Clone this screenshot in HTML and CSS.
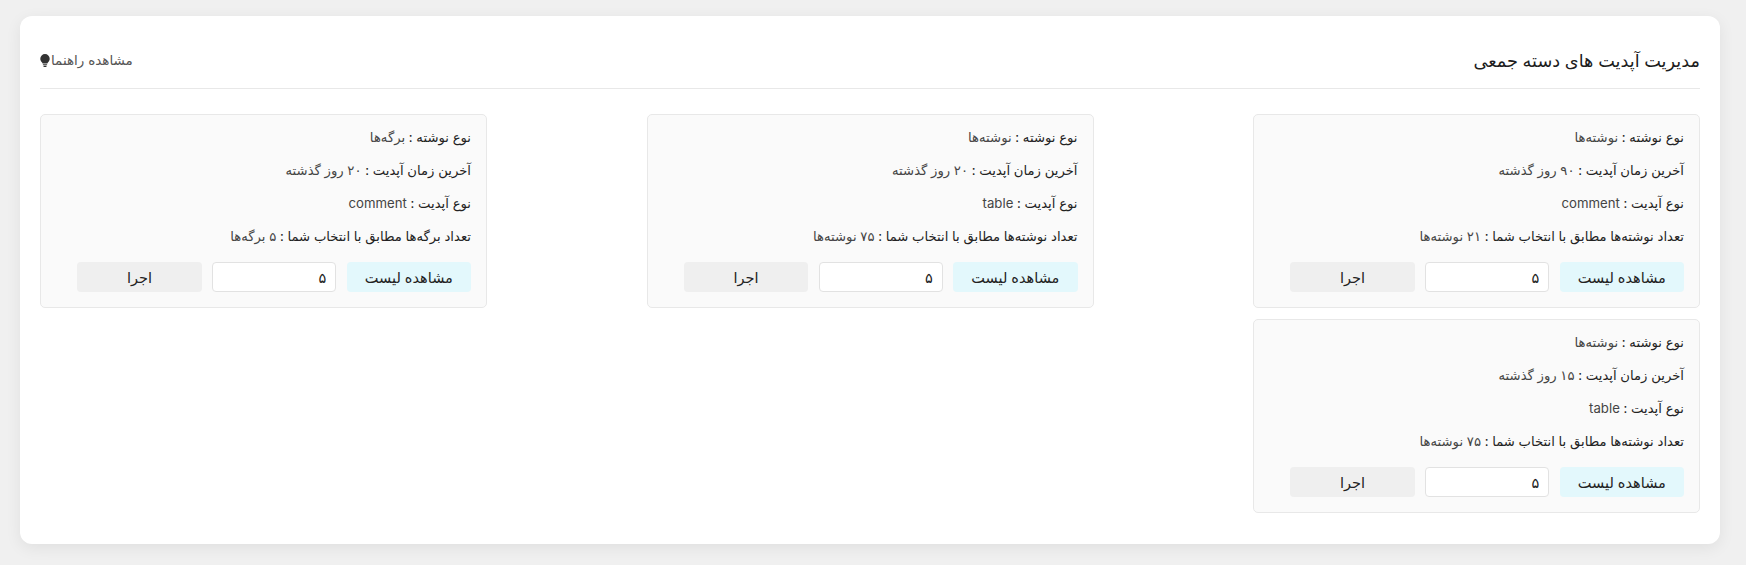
FILE: index.html
```html
<!DOCTYPE html>
<html lang="fa" dir="rtl">
<head>
  <meta charset="UTF-8" />
  <meta name="viewport" content="width=device-width, initial-scale=1.0"/>
  <title>مدیریت آپدیت های دسته جمعی</title>
  <link rel="stylesheet" href="styles.css">
</head>
<body>

<div class="panel">
  <div class="panel-head">
    <h2>مدیریت آپدیت های دسته جمعی</h2>
    <a class="guide" href="#">
      مشاهده راهنما
      <svg class="bulb" viewBox="0 0 10 13" width="10" height="13"><path fill="#333" d="M5 0a4.7 4.7 0 0 0-4.7 4.7c0 1.7.9 2.7 1.6 3.6.4.5.6.9.7 1.2h4.800c.1-.3.3-.7.7-1.200.7-.9 1.600-1.900 1.600-3.600A4.700 4.700 0 0 0 5 0z"/><rect fill="#333" x="2.800" y="10.200" width="4.400" height="1.100" rx=".5"/><rect fill="#333" x="3.500" y="11.800" width="3" height="1.100" rx=".5"/></svg>
    </a>
  </div>

  <div class="cards">
    <div class="card">
      <p><b>نوع نوشته :</b> نوشته‌ها</p>
      <p><b>آخرین زمان آپدیت :</b> ۹۰ روز گذشته</p>
      <p><b>نوع آپدیت :</b> comment</p>
      <p><b>تعداد نوشته‌ها مطابق با انتخاب شما :</b> ۲۱ نوشته‌ها</p>
      <div class="actions">
        <button class="btn-list">مشاهده لیست</button>
        <input type="text" value="۵" />
        <button class="btn-run">اجرا</button>
      </div>
    </div>

    <div class="card">
      <p><b>نوع نوشته :</b> نوشته‌ها</p>
      <p><b>آخرین زمان آپدیت :</b> ۲۰ روز گذشته</p>
      <p><b>نوع آپدیت :</b> table</p>
      <p><b>تعداد نوشته‌ها مطابق با انتخاب شما :</b> ۷۵ نوشته‌ها</p>
      <div class="actions">
        <button class="btn-list">مشاهده لیست</button>
        <input type="text" value="۵" />
        <button class="btn-run">اجرا</button>
      </div>
    </div>

    <div class="card">
      <p><b>نوع نوشته :</b> برگه‌ها</p>
      <p><b>آخرین زمان آپدیت :</b> ۲۰ روز گذشته</p>
      <p><b>نوع آپدیت :</b> comment</p>
      <p><b>تعداد برگه‌ها مطابق با انتخاب شما :</b> ۵ برگه‌ها</p>
      <div class="actions">
        <button class="btn-list">مشاهده لیست</button>
        <input type="text" value="۵" />
        <button class="btn-run">اجرا</button>
      </div>
    </div>

    <div class="card">
      <p><b>نوع نوشته :</b> نوشته‌ها</p>
      <p><b>آخرین زمان آپدیت :</b> ۱۵ روز گذشته</p>
      <p><b>نوع آپدیت :</b> table</p>
      <p><b>تعداد نوشته‌ها مطابق با انتخاب شما :</b> ۷۵ نوشته‌ها</p>
      <div class="actions">
        <button class="btn-list">مشاهده لیست</button>
        <input type="text" value="۵" />
        <button class="btn-run">اجرا</button>
      </div>
    </div>
  </div>
</div>

</body>
</html>
```

FILE: styles.css
```css
html, body {
  height: 565px;
  overflow: hidden;
}
body {
  font-family: Inter, "DejaVu Sans", sans-serif;
  margin: 0;
  padding: 16px 26px 0 20px;
  box-sizing: border-box;
  background: #f0f0f0;
  color: #333;
}
.panel {
  background: white;
  height: 528px;
  box-sizing: border-box;
  padding: 0 20px;
  border-radius: 12px;
  box-shadow: 0 4px 16px rgba(0,0,0,0.07);
}
.panel-head {
  display: flex;
  justify-content: space-between;
  align-items: center;
  height: 73px;
  padding-top: 16px;
  box-sizing: border-box;
  border-bottom: 1px solid #e8e8e8;
}
h2 {
  margin: 0;
  font-size: 17.7px;
  font-weight: 500;
  color: #1d1d1d;
}
.guide {
  display: flex;
  align-items: center;
  gap: 1px;
  font-size: 13.5px;
  color: #555;
  text-decoration: none;
}
.bulb {
  display: block;
}
.cards {
  display: flex;
  flex-wrap: wrap;
  justify-content: space-between;
  gap: 11px 0;
  margin-top: 25px;
}
.card {
  width: 447px;
  height: 194px;
  box-sizing: border-box;
  padding: 6px 15px 15px;
  background: #fafafa;
  border: 1px solid #e8e8e8;
  border-radius: 5px;
}
.card p {
  margin: 0;
  height: 33px;
  line-height: 33px;
  font-size: 13.2px;
  color: #444;
}
.card b {
  font-weight: 400;
  color: #222;
}
.actions {
  display: flex;
  gap: 10.4px;
  margin-top: 9px;
}
button, input {
  width: 124.3px;
  height: 30px;
  box-sizing: border-box;
  border-radius: 4px;
  font-family: inherit;
  font-size: 14.5px;
  color: #222;
}
button {
  border: none;
  cursor: pointer;
}
input {
  padding: 0 9px;
  background: white;
  border: 1px solid #e2e2e2;
  outline: none;
}
.btn-list {
  background: #e3f8fc;
}
.btn-run {
  background: #efefef;
}
```
